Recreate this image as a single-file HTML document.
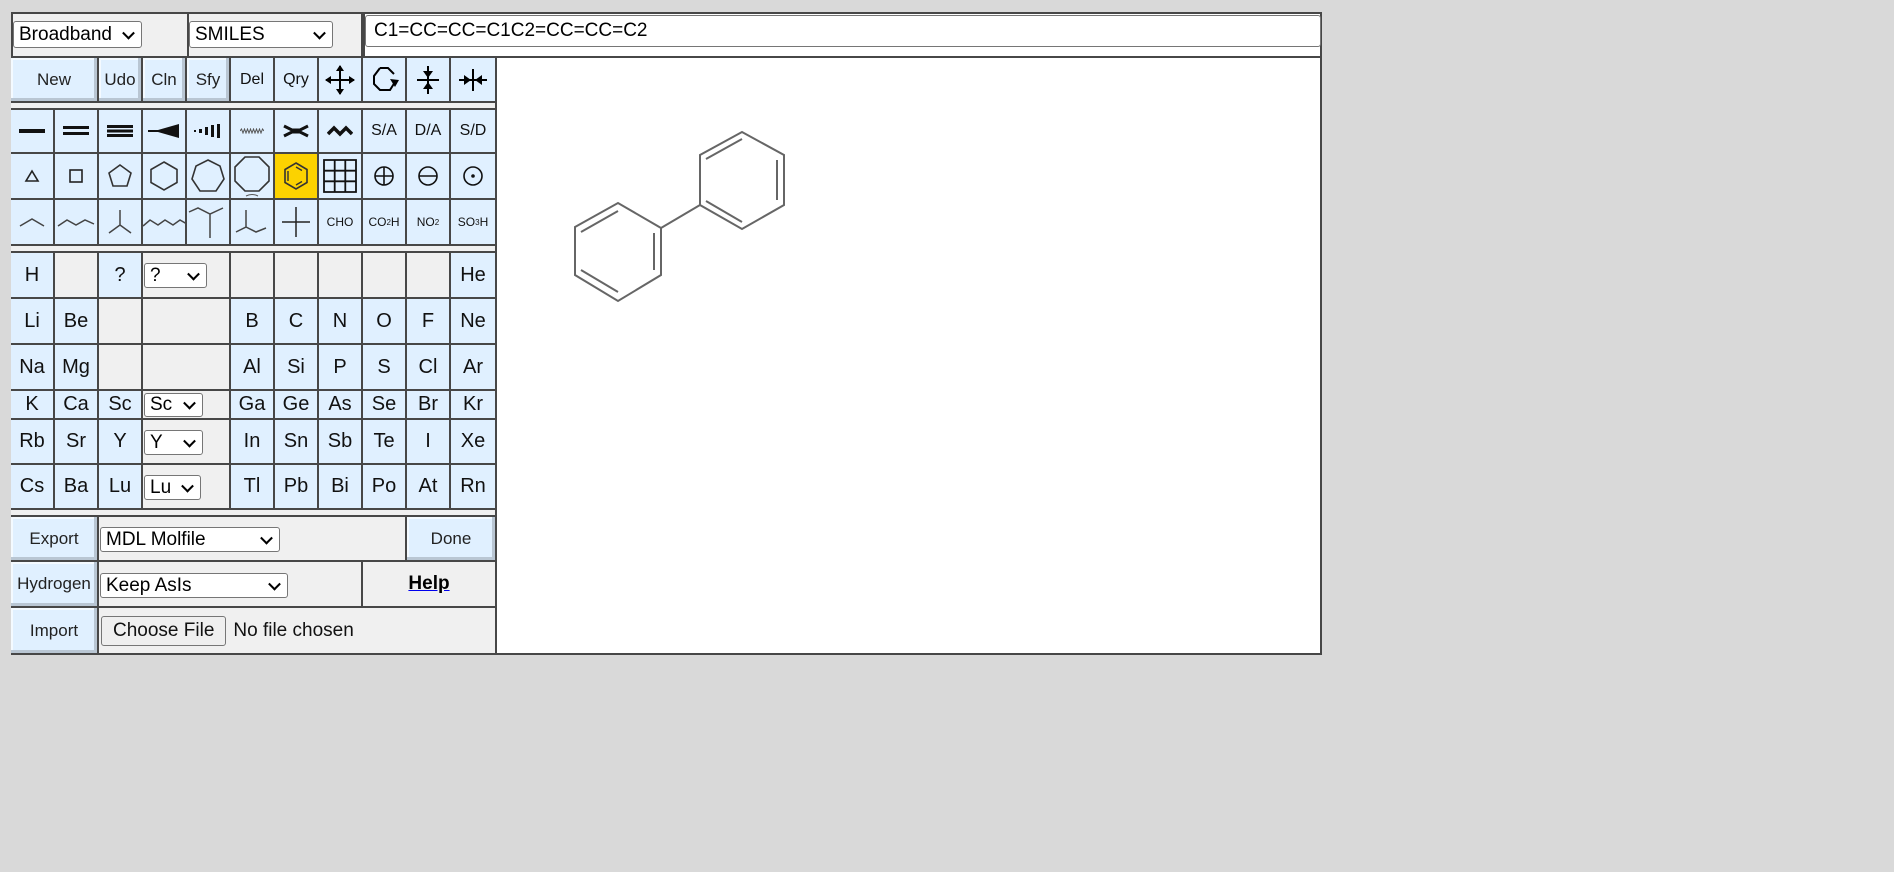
<!DOCTYPE html>
<html><head><meta charset="utf-8"><style>
body{margin:0;background:#d9d9d9;width:1894px;height:872px;overflow:hidden;font-family:"Liberation Sans",sans-serif;}
#p{position:absolute;left:11px;top:12px;width:1311px;height:643px;background:#474747;}
.c{position:absolute;background:#e0f0ff;display:flex;align-items:center;justify-content:center;font-size:20px;color:#111;box-sizing:border-box;}
.g{background:#f0f0f0;}
.s{font-size:16px;}
.b{background:#e0f0ff;font-family:"Liberation Sans Narrow","Liberation Sans",sans-serif;font-size:17px;box-shadow:inset -3px -3px 0 #b9c6d3,inset 2px 2px 0 #f4faff;color:#222;}
.sel{position:absolute;background:#fff;border:1px solid #767676;border-radius:3px;font-size:19px;color:#000;box-sizing:border-box;padding-left:5px;display:flex;align-items:center;}
.sel:after{content:"";position:absolute;right:8px;top:50%;width:7px;height:7px;border-right:2px solid #000;border-bottom:2px solid #000;transform:translateY(-70%) rotate(45deg);}
.sel.nx:after{display:none}
svg{display:block}
</style></head><body>
<div id="p">
<div class="c g" style="left:2px;top:2px;width:174px;height:42px"></div>
<div class="sel" style="left:2px;top:9px;width:129px;height:27px">Broadband</div>
<div class="c g" style="left:178px;top:2px;width:172px;height:42px"></div>
<div class="sel" style="left:178px;top:9px;width:144px;height:27px">SMILES</div>
<div class="c" style="left:354px;top:2px;width:955px;height:42px;background:#fff"></div>
<div class="sel nx" style="left:354px;top:3px;width:956px;height:32px;padding-left:8px;border-radius:3px">C1=CC=CC=C1C2=CC=CC=C2</div>
<div class="c b" style="left:0;top:46px;width:86px;height:43px">New</div>
<div class="c b" style="left:88px;top:46px;width:42px;height:43px">Udo</div>
<div class="c b" style="left:132px;top:46px;width:42px;height:43px">Cln</div>
<div class="c b" style="left:176px;top:46px;width:42px;height:43px">Sfy</div>
<div class="c s" style="left:220px;top:46px;width:42px;height:43px">Del</div>
<div class="c s" style="left:264px;top:46px;width:42px;height:43px">Qry</div>
<div class="c" style="left:308px;top:46px;width:42px;height:43px"><svg width="34" height="34" viewBox="0 0 34 34"><path d="M17 3V31M3 17H31" stroke="#000" stroke-width="2"/><path d="M17 2l-4 6h8zM17 32l-4-6h8zM2 17l6-4v8zM32 17l-6-4v8z" fill="#000"/></svg></div>
<div class="c" style="left:352px;top:46px;width:42px;height:43px"><svg width="32" height="32" viewBox="0 0 32 32"><path d="M12 4H20L26 10M27 18L22 26H12L6 20V12L12 4" fill="none" stroke="#000" stroke-width="2"/><path d="M22 15l5 8 4-7z" fill="#000"/></svg></div>
<div class="c" style="left:396px;top:46px;width:42px;height:43px"><svg width="30" height="34" viewBox="0 0 30 34"><path d="M4 17H26M15 3V31" stroke="#000" stroke-width="2"/><path d="M15 15l-5-7h10zM15 19l-5 7h10z" fill="#000"/></svg></div>
<div class="c" style="left:440px;top:46px;width:44px;height:43px"><svg width="34" height="30" viewBox="0 0 34 30"><path d="M3 15H31M17 4V26" stroke="#000" stroke-width="2"/><path d="M15 15l-7-5v10zM19 15l7-5v10z" fill="#000"/></svg></div>
<div class="c g" style="left:0;top:91px;width:484px;height:5px"></div>
<div class="c" style="left:0;top:98px;width:42px;height:42px"><svg width="26" height="6"><rect y="1" width="26" height="4" fill="#111"/></svg></div>
<div class="c" style="left:44px;top:98px;width:42px;height:42px"><svg width="26" height="12"><rect y="1" width="26" height="3" fill="#111"/><rect y="7" width="26" height="3" fill="#111"/></svg></div>
<div class="c" style="left:88px;top:98px;width:42px;height:42px"><svg width="26" height="14"><rect y="1" width="26" height="3" fill="#111"/><rect y="5.5" width="26" height="3" fill="#111"/><rect y="10" width="26" height="3" fill="#111"/></svg></div>
<div class="c" style="left:132px;top:98px;width:42px;height:42px"><svg width="32" height="16"><path d="M0 7H10L31 1V15L10 9H0z" fill="#111"/></svg></div>
<div class="c" style="left:176px;top:98px;width:42px;height:42px"><svg width="28" height="16"><g fill="#111"><rect x="0" y="7" width="2" height="2"/><rect x="5" y="6" width="3" height="4"/><rect x="11" y="4" width="3" height="8"/><rect x="17" y="2" width="3" height="12"/><rect x="23" y="1" width="3" height="14"/></g></svg></div>
<div class="c" style="left:220px;top:98px;width:42px;height:42px"><svg width="24" height="6"><path d="M0 3l1.5-2 1.5 4 1.5-4 1.5 4 1.5-4 1.5 4 1.5-4 1.5 4 1.5-4 1.5 4 1.5-4 1.5 4 1.5-4 1.5 4 1.5-4 1.5 2" fill="none" stroke="#555" stroke-width="1"/></svg></div>
<div class="c" style="left:264px;top:98px;width:42px;height:42px"><svg width="26" height="14"><path d="M1 2L9 6H17L25 2M1 12L9 8H17L25 12" stroke="#111" stroke-width="3" fill="none"/></svg></div>
<div class="c" style="left:308px;top:98px;width:42px;height:42px"><svg width="26" height="14"><path d="M1 10L7 4L13 10L19 4L25 10" stroke="#111" stroke-width="3.5" fill="none"/></svg></div>
<div class="c s" style="left:352px;top:98px;width:42px;height:42px">S/A</div>
<div class="c s" style="left:396px;top:98px;width:42px;height:42px">D/A</div>
<div class="c s" style="left:440px;top:98px;width:44px;height:42px">S/D</div>
<div class="c" style="left:0;top:142px;width:42px;height:44px"><svg width="16" height="14"><path d="M8 2L14 12H2z" fill="none" stroke="#222" stroke-width="1.6"/></svg></div>
<div class="c" style="left:44px;top:142px;width:42px;height:44px"><svg width="16" height="16"><rect x="2" y="2" width="12" height="12" fill="none" stroke="#222" stroke-width="1.6"/></svg></div>
<div class="c" style="left:88px;top:142px;width:42px;height:44px"><svg width="26" height="26"><path d="M13 2L24 10L20 23H6L2 10z" fill="none" stroke="#333" stroke-width="1.6"/></svg></div>
<div class="c" style="left:132px;top:142px;width:42px;height:44px"><svg width="30" height="32"><path d="M15 2L28 9.5V22.5L15 30L2 22.5V9.5z" fill="none" stroke="#333" stroke-width="1.6"/></svg></div>
<div class="c" style="left:176px;top:142px;width:42px;height:44px"><svg width="36" height="36"><path d="M18 2L30 8L34 21L26 33H10L2 21L6 8z" fill="none" stroke="#333" stroke-width="1.6"/></svg></div>
<div class="c" style="left:220px;top:142px;width:42px;height:44px;overflow:hidden"><svg width="40" height="44"><path d="M13 3H27L37 13V27L27 37H13L3 27V13z" fill="none" stroke="#333" stroke-width="1.6"/><path d="M14 42Q20 39 26 42" fill="none" stroke="#555"/></svg></div>
<div class="c" style="left:264px;top:142px;width:42px;height:44px;background:#fcd200"><svg width="30" height="32"><path d="M15 3L26 9.5V22.5L15 29L4 22.5V9.5z" fill="none" stroke="#333" stroke-width="1.6"/><path d="M7 11V21M15 7L21 10.5M15 25L21 21.5" stroke="#333" stroke-width="1.4"/></svg></div>
<div class="c" style="left:308px;top:142px;width:42px;height:44px"><svg width="36" height="36"><path d="M2 2H34V34H2zM12.7 2V34M23.3 2V34M2 12.7H34M2 23.3H34" fill="none" stroke="#111" stroke-width="1.8"/></svg></div>
<div class="c" style="left:352px;top:142px;width:42px;height:44px"><svg width="22" height="22"><circle cx="11" cy="11" r="9" fill="none" stroke="#111" stroke-width="1.6"/><path d="M2 11H20M11 2V20" stroke="#111" stroke-width="1.6"/></svg></div>
<div class="c" style="left:396px;top:142px;width:42px;height:44px"><svg width="22" height="22"><circle cx="11" cy="11" r="9" fill="none" stroke="#111" stroke-width="1.6"/><path d="M2 11H20" stroke="#111" stroke-width="1.6"/></svg></div>
<div class="c" style="left:440px;top:142px;width:44px;height:44px"><svg width="22" height="22"><circle cx="11" cy="11" r="9" fill="none" stroke="#111" stroke-width="1.6"/><circle cx="11" cy="11" r="1.8" fill="#111"/></svg></div>
<div class="c" style="left:0;top:188px;width:42px;height:44px"><svg width="26" height="14"><path d="M1 11L13 4L25 11" fill="none" stroke="#444" stroke-width="1.5"/></svg></div>
<div class="c" style="left:44px;top:188px;width:42px;height:44px"><svg width="38" height="14"><path d="M1 11L10 5L19 10L28 5L37 9" fill="none" stroke="#444" stroke-width="1.5"/></svg></div>
<div class="c" style="left:88px;top:188px;width:42px;height:44px"><svg width="26" height="30"><path d="M13 3V18L2 26M13 18L24 26" fill="none" stroke="#444" stroke-width="1.5"/></svg></div>
<div class="c" style="left:132px;top:188px;width:42px;height:44px"><svg width="44" height="14"><path d="M0 11L7 5L15 10L22 5L30 10L37 5L44 9" fill="none" stroke="#444" stroke-width="1.5"/></svg></div>
<div class="c" style="left:176px;top:188px;width:42px;height:44px"><svg width="40" height="36"><path d="M1 8L10 4L22 10L35 4M22 10V34" fill="none" stroke="#444" stroke-width="1.5"/></svg></div>
<div class="c" style="left:220px;top:188px;width:42px;height:44px"><svg width="40" height="36"><path d="M4 28L14 23V6M14 23L24 28L34 24" fill="none" stroke="#444" stroke-width="1.5"/></svg></div>
<div class="c" style="left:264px;top:188px;width:42px;height:44px"><svg width="32" height="34"><path d="M16 2V32M2 17H30" fill="none" stroke="#222" stroke-width="1.5"/></svg></div>
<div class="c" style="left:308px;top:188px;width:42px;height:44px;font-size:12px">CHO</div>
<div class="c" style="left:352px;top:188px;width:42px;height:44px;font-size:12px">CO<sub style="font-size:8px">2</sub>H</div>
<div class="c" style="left:396px;top:188px;width:42px;height:44px;font-size:12px">NO<sub style="font-size:8px">2</sub></div>
<div class="c" style="left:440px;top:188px;width:44px;height:44px;font-size:12px">SO<sub style="font-size:8px">3</sub>H</div>
<div class="c g" style="left:0;top:234px;width:484px;height:5px"></div>
<div class="c" style="left:0;top:241px;width:42px;height:44px">H</div>
<div class="c g" style="left:44px;top:241px;width:42px;height:44px"></div>
<div class="c" style="left:88px;top:241px;width:42px;height:44px">?</div>
<div class="c g" style="left:132px;top:241px;width:86px;height:44px"></div>
<div class="sel" style="left:133px;top:251px;width:63px;height:25px">?</div>
<div class="c g" style="left:220px;top:241px;width:42px;height:44px"></div>
<div class="c g" style="left:264px;top:241px;width:42px;height:44px"></div>
<div class="c g" style="left:308px;top:241px;width:42px;height:44px"></div>
<div class="c g" style="left:352px;top:241px;width:42px;height:44px"></div>
<div class="c g" style="left:396px;top:241px;width:42px;height:44px"></div>
<div class="c" style="left:440px;top:241px;width:44px;height:44px">He</div>
<div class="c" style="left:0;top:287px;width:42px;height:44px">Li</div>
<div class="c" style="left:44px;top:287px;width:42px;height:44px">Be</div>
<div class="c g" style="left:88px;top:287px;width:42px;height:44px"></div>
<div class="c g" style="left:132px;top:287px;width:86px;height:44px"></div>
<div class="c" style="left:220px;top:287px;width:42px;height:44px">B</div>
<div class="c" style="left:264px;top:287px;width:42px;height:44px">C</div>
<div class="c" style="left:308px;top:287px;width:42px;height:44px">N</div>
<div class="c" style="left:352px;top:287px;width:42px;height:44px">O</div>
<div class="c" style="left:396px;top:287px;width:42px;height:44px">F</div>
<div class="c" style="left:440px;top:287px;width:44px;height:44px">Ne</div>
<div class="c" style="left:0;top:333px;width:42px;height:44px">Na</div>
<div class="c" style="left:44px;top:333px;width:42px;height:44px">Mg</div>
<div class="c g" style="left:88px;top:333px;width:42px;height:44px"></div>
<div class="c g" style="left:132px;top:333px;width:86px;height:44px"></div>
<div class="c" style="left:220px;top:333px;width:42px;height:44px">Al</div>
<div class="c" style="left:264px;top:333px;width:42px;height:44px">Si</div>
<div class="c" style="left:308px;top:333px;width:42px;height:44px">P</div>
<div class="c" style="left:352px;top:333px;width:42px;height:44px">S</div>
<div class="c" style="left:396px;top:333px;width:42px;height:44px">Cl</div>
<div class="c" style="left:440px;top:333px;width:44px;height:44px">Ar</div>
<div class="c" style="left:0;top:379px;width:42px;height:27px">K</div>
<div class="c" style="left:44px;top:379px;width:42px;height:27px">Ca</div>
<div class="c" style="left:88px;top:379px;width:42px;height:27px">Sc</div>
<div class="c g" style="left:132px;top:379px;width:86px;height:27px"></div>
<div class="sel" style="left:133px;top:381px;width:59px;height:24px">Sc</div>
<div class="c" style="left:220px;top:379px;width:42px;height:27px">Ga</div>
<div class="c" style="left:264px;top:379px;width:42px;height:27px">Ge</div>
<div class="c" style="left:308px;top:379px;width:42px;height:27px">As</div>
<div class="c" style="left:352px;top:379px;width:42px;height:27px">Se</div>
<div class="c" style="left:396px;top:379px;width:42px;height:27px">Br</div>
<div class="c" style="left:440px;top:379px;width:44px;height:27px">Kr</div>
<div class="c" style="left:0;top:408px;width:42px;height:43px">Rb</div>
<div class="c" style="left:44px;top:408px;width:42px;height:43px">Sr</div>
<div class="c" style="left:88px;top:408px;width:42px;height:43px">Y</div>
<div class="c g" style="left:132px;top:408px;width:86px;height:43px"></div>
<div class="sel" style="left:133px;top:418px;width:59px;height:25px">Y</div>
<div class="c" style="left:220px;top:408px;width:42px;height:43px">In</div>
<div class="c" style="left:264px;top:408px;width:42px;height:43px">Sn</div>
<div class="c" style="left:308px;top:408px;width:42px;height:43px">Sb</div>
<div class="c" style="left:352px;top:408px;width:42px;height:43px">Te</div>
<div class="c" style="left:396px;top:408px;width:42px;height:43px">I</div>
<div class="c" style="left:440px;top:408px;width:44px;height:43px">Xe</div>
<div class="c" style="left:0;top:453px;width:42px;height:43px">Cs</div>
<div class="c" style="left:44px;top:453px;width:42px;height:43px">Ba</div>
<div class="c" style="left:88px;top:453px;width:42px;height:43px">Lu</div>
<div class="c g" style="left:132px;top:453px;width:86px;height:43px"></div>
<div class="sel" style="left:133px;top:463px;width:57px;height:25px">Lu</div>
<div class="c" style="left:220px;top:453px;width:42px;height:43px">Tl</div>
<div class="c" style="left:264px;top:453px;width:42px;height:43px">Pb</div>
<div class="c" style="left:308px;top:453px;width:42px;height:43px">Bi</div>
<div class="c" style="left:352px;top:453px;width:42px;height:43px">Po</div>
<div class="c" style="left:396px;top:453px;width:42px;height:43px">At</div>
<div class="c" style="left:440px;top:453px;width:44px;height:43px">Rn</div>
<div class="c g" style="left:0;top:498px;width:484px;height:5px"></div>
<div class="c b" style="left:0;top:505px;width:86px;height:43px">Export</div>
<div class="c g" style="left:88px;top:505px;width:306px;height:43px"></div>
<div class="sel" style="left:89px;top:515px;width:180px;height:25px">MDL Molfile</div>
<div class="c b" style="left:396px;top:505px;width:88px;height:43px">Done</div>
<div class="c b" style="left:0;top:550px;width:86px;height:44px">Hydrogen</div>
<div class="c g" style="left:88px;top:550px;width:262px;height:44px"></div>
<div class="sel" style="left:89px;top:561px;width:188px;height:25px">Keep AsIs</div>
<div class="c g" style="left:352px;top:550px;width:132px;height:44px;font-weight:bold;font-size:19px"><span style="color:#000;text-decoration:underline;text-decoration-color:#00e">Help</span></div>
<div class="c b" style="left:0;top:596px;width:86px;height:45px">Import</div>
<div class="c g" style="left:88px;top:596px;width:396px;height:45px;justify-content:flex-start;font-size:19px">
<span style="margin-left:2px;border:1px solid #767676;border-radius:3px;background:#efefef;padding:3px 11px;font-size:19px">Choose File</span><span style="margin-left:7px">No file chosen</span></div>
<div class="c" style="left:486px;top:46px;width:823px;height:595px;background:#fff"></div>
</div>
<svg style="position:absolute;left:0;top:0" width="1894" height="872"><g fill="none" stroke="#666" stroke-width="2">
<path d="M575 227L618 203L661 228L661 275L618 301L575 275Z"/>
<path d="M581 232L618 211M654 233V270M581 270L618 292" />
<path d="M700 205L700 155L742 132L784 155L784 205L742 229Z"/>
<path d="M706 159L742 139M777 160V200M706 201L742 222"/>
<path d="M661 228L700 205"/>
</g></svg>
</body></html>
